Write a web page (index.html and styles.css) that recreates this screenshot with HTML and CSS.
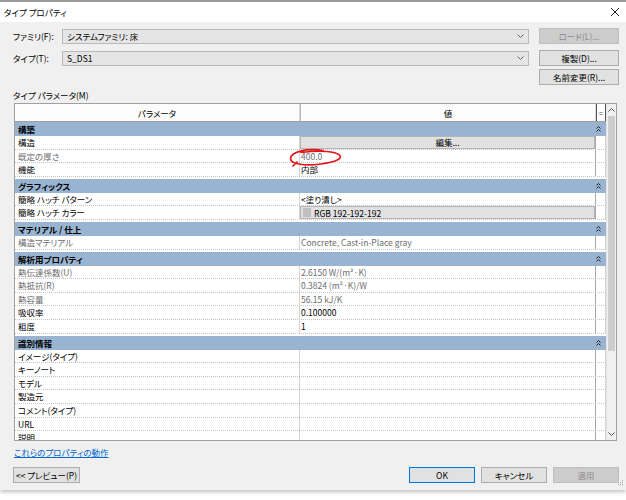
FILE: index.html
```html
<!DOCTYPE html>
<html lang="ja">
<head>
<meta charset="utf-8">
<title>タイプ プロパティ</title>
<link rel="stylesheet" href="styles.css">
</head>
<body>
<div class="dialog">
  <div class="titlebar">
    <span class="title">タイプ プロパティ</span>
    <svg class="close" width="10" height="10" viewBox="0 0 10 10"><path d="M1 1 L9 9 M9 1 L1 9" stroke="#222" stroke-width="1" fill="none"/></svg>
  </div>
  <div class="content">
    <div class="field-row">
      <span class="label">ファミリ(F):</span>
      <div class="combo"><span>システムファミリ: 床</span><svg width="7" height="4" viewBox="0 0 7 4"><path d="M0.5 0.5 L3.5 3.5 L6.5 0.5" stroke="#666" fill="none"/></svg></div>
      <button class="btn disabled">ロード(L)...</button>
    </div>
    <div class="field-row">
      <span class="label">タイプ(T):</span>
      <div class="combo"><span>S_DS1</span><svg width="7" height="4" viewBox="0 0 7 4"><path d="M0.5 0.5 L3.5 3.5 L6.5 0.5" stroke="#666" fill="none"/></svg></div>
      <button class="btn">複製(D)...</button>
    </div>
    <div class="field-row right">
      <button class="btn">名前変更(R)...</button>
    </div>
    <div class="section-label">タイプ パラメータ(M)</div>

    <div class="grid">
      <div class="sheet">
        <div class="head">
          <div class="hc">パラメータ</div>
          <div class="hc">値</div>
          <div class="hc eq">=</div>
        </div>

        <div class="group first"><span>構築</span><svg class="col" width="5" height="6" viewBox="0 0 5 6"><path d="M0.5 2.5 L2.5 0.5 L4.5 2.5 M0.5 5.5 L2.5 3.5 L4.5 5.5" stroke="#222" fill="none"/></svg></div>
        <div class="row"><div class="p">構造</div><div class="v"><div class="cellbtn center">編集...</div></div><div class="x"></div></div>
        <div class="row ro"><div class="p">既定の厚さ</div><div class="v">400.0</div><div class="x"></div></div>
        <div class="row"><div class="p">機能</div><div class="v">内部</div><div class="x"></div></div>

        <div class="group"><span>グラフィックス</span><svg class="col" width="5" height="6" viewBox="0 0 5 6"><path d="M0.5 2.5 L2.5 0.5 L4.5 2.5 M0.5 5.5 L2.5 3.5 L4.5 5.5" stroke="#222" fill="none"/></svg></div>
        <div class="row"><div class="p">簡略 ハッチ パターン</div><div class="v">&lt;塗り潰し&gt;</div><div class="x"></div></div>
        <div class="row"><div class="p">簡略 ハッチ カラー</div><div class="v"><div class="cellbtn"><span class="swatch"></span>RGB 192-192-192</div></div><div class="x"></div></div>

        <div class="group"><span>マテリアル / 仕上</span><svg class="col" width="5" height="6" viewBox="0 0 5 6"><path d="M0.5 2.5 L2.5 0.5 L4.5 2.5 M0.5 5.5 L2.5 3.5 L4.5 5.5" stroke="#222" fill="none"/></svg></div>
        <div class="row ro"><div class="p">構造マテリアル</div><div class="v">Concrete, Cast-in-Place gray</div><div class="x"></div></div>

        <div class="group"><span>解析用プロパティ</span><svg class="col" width="5" height="6" viewBox="0 0 5 6"><path d="M0.5 2.5 L2.5 0.5 L4.5 2.5 M0.5 5.5 L2.5 3.5 L4.5 5.5" stroke="#222" fill="none"/></svg></div>
        <div class="row ro"><div class="p">熱伝達係数(U)</div><div class="v">2.6150 W/(m²·K)</div><div class="x"></div></div>
        <div class="row ro"><div class="p">熱抵抗(R)</div><div class="v">0.3824 (m²·K)/W</div><div class="x"></div></div>
        <div class="row ro"><div class="p">熱容量</div><div class="v">56.15 kJ/K</div><div class="x"></div></div>
        <div class="row"><div class="p">吸収率</div><div class="v">0.100000</div><div class="x"></div></div>
        <div class="row"><div class="p">粗度</div><div class="v">1</div><div class="x"></div></div>

        <div class="group"><span>識別情報</span><svg class="col" width="5" height="6" viewBox="0 0 5 6"><path d="M0.5 2.5 L2.5 0.5 L4.5 2.5 M0.5 5.5 L2.5 3.5 L4.5 5.5" stroke="#222" fill="none"/></svg></div>
        <div class="row"><div class="p">イメージ(タイプ)</div><div class="v"></div><div class="x"></div></div>
        <div class="row"><div class="p">キーノート</div><div class="v"></div><div class="x"></div></div>
        <div class="row"><div class="p">モデル</div><div class="v"></div><div class="x"></div></div>
        <div class="row"><div class="p">製造元</div><div class="v"></div><div class="x"></div></div>
        <div class="row"><div class="p">コメント(タイプ)</div><div class="v"></div><div class="x"></div></div>
        <div class="row"><div class="p">URL</div><div class="v"></div><div class="x"></div></div>
        <div class="row"><div class="p">説明</div><div class="v"></div><div class="x"></div></div>
      </div>
      <div class="vscroll">
        <div class="arrow"><svg width="7" height="4" viewBox="0 0 7 4"><path d="M0.5 3.5 L3.5 0.5 L6.5 3.5" stroke="#555" fill="none"/></svg></div>
        <div class="track"><div class="thumb"></div></div>
        <div class="arrow"><svg width="7" height="4" viewBox="0 0 7 4"><path d="M0.5 0.5 L3.5 3.5 L6.5 0.5" stroke="#555" fill="none"/></svg></div>
      </div>
    </div>

    <div class="link">これらのプロパティの動作</div>

    <div class="footer">
      <button class="btn preview">&lt;&lt; プレビュー(P)</button>
      <div class="spacer"></div>
      <button class="btn default">OK</button>
      <button class="btn">キャンセル</button>
      <button class="btn disabled">適用</button>
    </div>
  </div>
  <svg class="grip" width="8" height="8" viewBox="0 0 8 8"><g fill="#a0a0a0"><rect x="6" y="0" width="1" height="1"/><rect x="4" y="2" width="1" height="1"/><rect x="6" y="2" width="1" height="1"/><rect x="2" y="4" width="1" height="1"/><rect x="4" y="4" width="1" height="1"/><rect x="6" y="4" width="1" height="1"/></g></svg>
</div>
<svg class="annot" width="60" height="24" viewBox="286 146 60 24"><path d="M323 150.5 C306 148 291 152 290.5 158.5 C290.5 164.5 306 166 321 164 C336 162 343 158.5 339.5 155 C335.5 151.5 321 150 301 152.5 M297 162 L293 166" stroke="#e0161c" stroke-width="1.7" fill="none" stroke-linecap="round"/></svg>
</body>
</html>
```

FILE: styles.css
```css
* { box-sizing: border-box; }

html, body {
  margin: 0;
  padding: 0;
  background: #ffffff;
}

body {
  font-family: "Noto Sans CJK JP", "Noto Sans", sans-serif;
  font-size: 8.5px;
  font-feature-settings: "palt";
  color: #000;
  width: 626px;
  height: 500px;
  overflow: hidden;
  position: relative;
}

.dialog {
  position: relative;
  height: 490px;
  border-top: 2px solid #9a9a9a;
  background: #f0f0f0;
  display: flex;
  flex-direction: column;
  box-shadow: 0 2px 4px rgba(0, 0, 0, 0.25);
}

.titlebar {
  height: 20px;
  background: #ffffff;
  display: flex;
  align-items: center;
  justify-content: space-between;
  padding: 0 6px 0 4px;
}

.title {
  font-size: 8.5px;
  line-height: 12px;
}

.close {
  display: block;
}

.content {
  flex: 1;
  padding: 6px 7px 0 13px;
  display: flex;
  flex-direction: column;
}

.field-row {
  display: flex;
  align-items: center;
  height: 16px;
}

.field-row + .field-row {
  margin-top: 6px;
}

.field-row.right {
  justify-content: flex-end;
  margin-top: 3px;
}

.label {
  width: 49px;
  flex: none;
  line-height: 12px;
}

.combo {
  flex: 1;
  height: 15px;
  background: #e5e5e5;
  border: 1px solid #b9b9b9;
  display: flex;
  align-items: center;
  justify-content: space-between;
  padding: 0 4px 0 4px;
  margin-right: 10px;
  line-height: 12px;
}

.combo svg {
  display: block;
}

.btn {
  font-family: inherit;
  font-size: 8.5px;
  font-feature-settings: "palt";
  width: 80px;
  height: 16px;
  padding: 0;
  background: #e1e1e1;
  border: 1px solid #adadad;
  color: #000;
  line-height: 12px;
  flex: none;
}

.btn.disabled {
  background: #cccccc;
  border-color: #bfbfbf;
  color: #8c8c8c;
}

.section-label {
  margin-top: 4px;
  line-height: 12px;
}

.grid {
  margin: 2px 2px 0 1px;
  height: 338px;
  border: 1px solid #a0a0a0;
  display: flex;
  background: #ffffff;
}

.sheet {
  flex: 1;
  overflow: hidden;
  background: #ffffff;
}

.head {
  display: grid;
  grid-template-columns: 285px 296px 1fr;
  height: 18px;
  border-bottom: 1px solid #a0a0a0;
}

.hc {
  display: flex;
  align-items: center;
  justify-content: center;
  border-right: 1px solid #d9d9d9;
  background: #fcfcfc;
  line-height: 12px;
}

.hc:nth-child(2) {
  border-left: 1px solid #b5b5b5;
}

.hc.eq {
  border-left: 1px solid #555;
  border-right: 1px solid #555;
  font-size: 7px;
  color: #444;
}

.group {
  height: 14px;
  margin-top: 2px;
  background: #99b4d1;
  font-weight: bold;
  display: flex;
  align-items: center;
  justify-content: space-between;
  padding: 0 5px 0 3px;
  line-height: 12px;
}

.group.first {
  margin-top: 0;
}

.group .col {
  display: block;
}

.row {
  display: grid;
  grid-template-columns: 285px 296px 1fr;
  height: 13.6px;
  border-bottom: 1px dotted #c4c4c4;
}

.row .p {
  padding-left: 3px;
  line-height: 12.6px;
  border-right: 1px solid #d4d4d4;
  white-space: nowrap;
}

.row .v {
  padding-left: 1px;
  line-height: 12.6px;
  border-right: 1px solid #a9a9a9;
  white-space: nowrap;
}

.row .x {
  border-right: 1px solid #d4d4d4;
}

.row.ro .p,
.row.ro .v {
  color: #6d6d6d;
}

.cellbtn {
  height: 12.6px;
  margin-left: -1px;
  background: #e1e1e1;
  border: 1px solid #b5b5b5;
  display: flex;
  align-items: center;
  line-height: 10px;
  padding-left: 2px;
}

.cellbtn.center {
  justify-content: center;
  padding-left: 0;
}

.swatch {
  width: 8px;
  height: 9px;
  background: #c0c0c0;
  margin-right: 3px;
}

.vscroll {
  width: 10px;
  background: #f0f0f0;
  border-left: 1px solid #e4e4e4;
  display: flex;
  flex-direction: column;
}

.arrow {
  height: 12px;
  display: flex;
  align-items: center;
  justify-content: center;
}

.arrow svg {
  display: block;
}

.track {
  flex: 1;
}

.thumb {
  height: 235px;
  background: #cdcdcd;
  margin: 0 1px;
}

.link {
  margin-top: 5px;
  line-height: 12px;
  color: #0066cc;
  text-decoration: underline;
  align-self: flex-start;
  margin-left: 1px;
}

.footer {
  margin-top: 9px;
  display: flex;
  gap: 6px;
  height: 16px;
}

.footer .btn {
  width: 66px;
}

.footer .btn.preview {
  width: 67px;
}

.spacer {
  flex: 1;
}

.btn.default {
  border: 1px solid #0078d7;
  box-shadow: inset 0 0 0 1px #cfe3f5;
}

.grip {
  position: absolute;
  right: 2px;
  bottom: 2px;
}

.annot {
  position: absolute;
  left: 286px;
  top: 146px;
}
```
